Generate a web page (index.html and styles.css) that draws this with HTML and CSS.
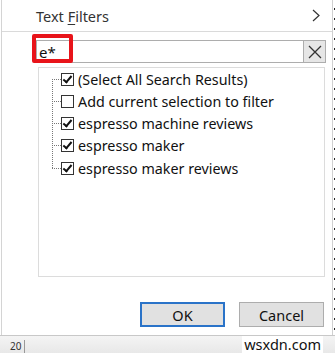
FILE: index.html
```html
<!DOCTYPE html>
<html lang="en">
<head>
    <meta charset="UTF-8">
    <title>Text Filters</title>
    <link rel="stylesheet" href="styles.css">
</head>
<body>
    <div class="screen">
        <div class="dialog">
            <div class="menu-row">
                <span class="menu-label">Text <u>F</u>ilters</span>
                <svg class="chevron" width="8" height="13" viewBox="0 0 8 13"><path d="M1 1 L7 6.5 L1 12" fill="none" stroke="#333" stroke-width="1.2"/></svg>
            </div>
            <div class="separator"></div>

            <div class="search">
                <div class="search-box">
                    <span class="search-text">e*</span>
                    <span class="highlight"></span>
                </div>
                <div class="clear-btn">
                    <svg width="14" height="14" viewBox="0 0 14 14"><path d="M1 1 L13 13 M13 1 L1 13" stroke="#333" stroke-width="1.3"/></svg>
                </div>
            </div>

            <div class="list">
                <div class="tree">
                    <div class="item">
                        <span class="branch"></span>
                        <span class="check checked"></span>
                        <span class="label">(Select All Search Results)</span>
                    </div>
                    <div class="item">
                        <span class="branch"></span>
                        <span class="check"></span>
                        <span class="label">Add current selection to filter</span>
                    </div>
                    <div class="item">
                        <span class="branch"></span>
                        <span class="check checked"></span>
                        <span class="label">espresso machine reviews</span>
                    </div>
                    <div class="item">
                        <span class="branch"></span>
                        <span class="check checked"></span>
                        <span class="label">espresso maker</span>
                    </div>
                    <div class="item">
                        <span class="branch"></span>
                        <span class="check checked"></span>
                        <span class="label">espresso maker reviews</span>
                    </div>
                </div>
            </div>

            <div class="buttons">
                <button class="btn btn-ok">OK</button>
                <button class="btn">Cancel</button>
            </div>
        </div>
        <div class="sheet-edge"></div>
    </div>
    <div class="footer">
        <span class="row-num">20</span>
        <span class="watermark">wsxdn.com</span>
    </div>
</body>
</html>
```

FILE: styles.css
```css
body {
    margin: 0;
    font-family: "Noto Sans", "Open Sans", sans-serif;
    color: #1a1a1a;
    background: #fff;
}

.screen {
    display: flex;
    height: 335px;
}

.dialog {
    width: 330px;
    border-left: 1px solid #d4d4d4;
    margin-left: 1px;
    background: #fff;
    display: flex;
    flex-direction: column;
}

.sheet-edge {
    flex: 1;
    border-left: 1px solid #d0d0d0;
    background: repeating-linear-gradient(180deg, #fff 0, #fff 8px, #222 8px, #222 10px);
    background-size: 1px 100%;
    background-repeat: no-repeat;
    background-position: 1px 0;
}

.menu-row {
    height: 31px;
    display: flex;
    align-items: center;
    justify-content: space-between;
    padding: 0 12px 0 34px;
}

.menu-label {
    font-size: 14.5px;
    color: #333;
}

.menu-label u {
    text-decoration-thickness: 1px;
    text-underline-offset: 2px;
}

.separator {
    height: 1px;
    background: #dadada;
}

.search {
    display: flex;
    margin: 8px 6px 0 34px;
    height: 21px;
    border: 1px solid #adadad;
}

.search-box {
    flex: 1;
    position: relative;
    display: flex;
    align-items: center;
    padding-left: 2px;
}

.search-text {
    font-size: 15px;
    color: #111;
}

.highlight {
    position: absolute;
    left: -5px;
    top: -7px;
    width: 33px;
    height: 21px;
    border: 4px solid #e8141a;
    border-radius: 2px;
}

.clear-btn {
    width: 21px;
    border-left: 1px solid #adadad;
    background: #e6e6e6;
    display: flex;
    align-items: center;
    justify-content: center;
}

.list {
    margin: 4px 7px 0 36px;
    height: 208px;
    border: 1px solid #dcdcdc;
}

.tree {
    position: relative;
    margin-left: 13px;
}

.tree::before {
    content: "";
    position: absolute;
    left: 0;
    top: 11px;
    bottom: 11px;
    border-left: 1px dotted #777;
}

.item {
    display: flex;
    align-items: center;
    height: 22.25px;
}

.branch {
    width: 9px;
    border-top: 1px dotted #777;
}

.check {
    width: 11px;
    height: 11px;
    border: 1px solid #333;
    margin-right: 4px;
    position: relative;
}

.check.checked::after {
    content: "";
    position: absolute;
    left: 3px;
    top: 0;
    width: 3px;
    height: 7px;
    border: solid #111;
    border-width: 0 2px 2px 0;
    transform: rotate(40deg);
}

.label {
    font-size: 14.3px;
    color: #111;
    white-space: nowrap;
}

.buttons {
    display: flex;
    justify-content: flex-end;
    gap: 14px;
    margin: 25px 8px 0 0;
}

.btn {
    width: 85px;
    height: 25px;
    font-family: "Noto Sans", "Open Sans", sans-serif;
    font-size: 14.5px;
    color: #111;
    background: #e1e1e1;
    border: 1px solid #adadad;
    padding: 0;
}

.btn-ok {
    border: 2px solid #2a73c8;
}

.footer {
    height: 17px;
    border-top: 1px solid #c8c8c8;
    background: linear-gradient(180deg, #f4f4f4, #e8e8e8);
    display: flex;
    justify-content: space-between;
    align-items: flex-end;
    position: relative;
}

.row-num {
    font-size: 10px;
    color: #333;
    margin-left: 10px;
    line-height: 13px;
    border-right: 1px solid #999;
    padding-right: 3px;
}

.watermark {
    position: absolute;
    right: 12px;
    top: 0;
    font-size: 14.5px;
    color: #111;
    background: #fff;
    padding: 0 2px;
    line-height: 17px;
}
```
